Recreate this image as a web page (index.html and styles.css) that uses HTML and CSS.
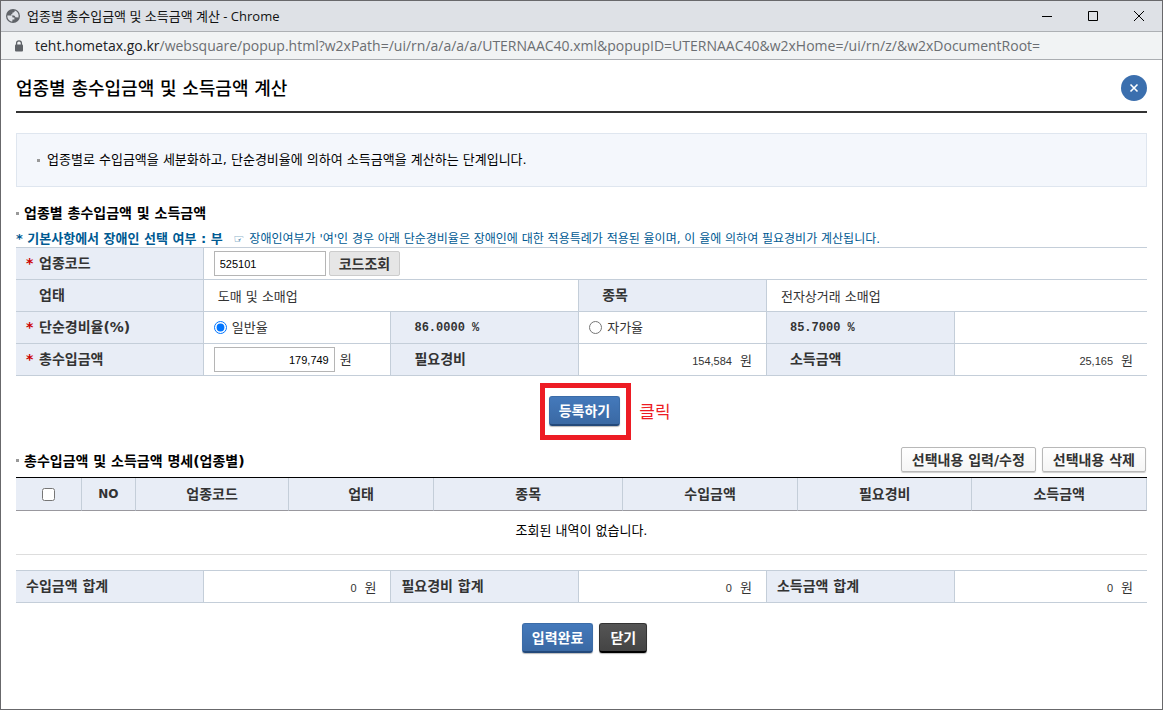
FILE: index.html
```html
<!DOCTYPE html>
<html lang="ko">
<head>
<meta charset="utf-8">
<title>업종별 총수입금액 및 소득금액 계산</title>
<link rel="stylesheet" href="styles.css">
</head>
<body>
<div class="window">
  <header class="titlebar">
    <svg class="globe" viewBox="0 0 16 16" aria-hidden="true"><circle cx="8" cy="8" r="7" fill="#5f6368"/><path d="M2.300 7.500 L5.500 7.500 C7 7.500 7.600 8.300 7.600 9.600 L9.400 9.600 L9.400 11.400 L7.500 11.600 L7.300 13.600 C4.600 13.400 2.200 11 2.300 7.500 Z M9.800 2.500 C9.800 4 9 4.600 7.600 4.600 L7.200 6.300 L6 6.600 L6 7.400 L8.800 7.500 C9.900 7.600 10.200 8.600 10.400 9.300 L13.400 9.400 C14.300 6.600 12.600 3.400 9.800 2.500 Z" fill="#dee1e6"/></svg>
    <span class="window-title">업종별 총수입금액 및 소득금액 계산 - Chrome</span>
    <button class="win-btn" type="button" aria-label="최소화"><svg viewBox="0 0 12 12"><path d="M1 6.500H11" stroke="#000" fill="none"/></svg></button>
    <button class="win-btn" type="button" aria-label="최대화"><svg viewBox="0 0 12 12"><path d="M1.500 1.500H10.500V10.500H1.500Z" stroke="#000" fill="none"/></svg></button>
    <button class="win-btn" type="button" aria-label="창 닫기"><svg viewBox="0 0 12 12"><path d="M1 1L11 11M11 1L1 11" stroke="#000" fill="none"/></svg></button>
  </header>
  <div class="addressbar">
    <svg class="lock" viewBox="0 0 10 12" aria-hidden="true"><path d="M2.600 5V3.200A2.400 2.400 0 0 1 7.400 3.200V5" fill="none" stroke="#5f6368" stroke-width="1.300"/><rect x="1" y="4.500" width="8" height="7" rx="1" fill="#5f6368"/></svg>
    <span class="url"><span class="host">teht.hometax.go.kr</span>/websquare/popup.html?w2xPath=/ui/rn/a/a/a/a/UTERNAAC40.xml&amp;popupID=UTERNAAC40&amp;w2xHome=/ui/rn/z/&amp;w2xDocumentRoot=</span>
  </div>

  <main class="page">
    <div class="page-head">
      <h1>업종별 총수입금액 및 소득금액 계산</h1>
      <button class="close" type="button" aria-label="닫기"><svg viewBox="0 0 10 10"><path d="M1.500 1.500L8.500 8.500M8.500 1.500L1.500 8.500" stroke="#fff" stroke-width="1.600" fill="none"/></svg></button>
    </div>

    <p class="info">업종별로 수입금액을 세분화하고, 단순경비율에 의하여 소득금액을 계산하는 단계입니다.</p>

    <h2 class="section-title">업종별 총수입금액 및 소득금액</h2>
    <p class="note"><strong>* 기본사항에서 장애인 선택 여부 : 부</strong><span class="hand">☞</span><span>장애인여부가 '여'인 경우 아래 단순경비율은 장애인에 대한 적용특례가 적용된 율이며, 이 율에 의하여 필요경비가 계산됩니다.</span></p>

    <table class="form">
      <colgroup><col class="c-sixth" span="5"><col></colgroup>
      <tr>
        <th class="required"><label for="code">업종코드</label></th>
        <td colspan="5"><div class="fields"><input class="text code" id="code" type="text" value="525101"><button class="btn-gray" type="button">코드조회</button></div></td>
      </tr>
      <tr>
        <th>업태</th>
        <td class="value" colspan="2">도매 및 소매업</td>
        <th>종목</th>
        <td class="value" colspan="2">전자상거래 소매업</td>
      </tr>
      <tr>
        <th class="required">단순경비율(%)</th>
        <td><label class="fields"><input type="radio" name="rate" checked>일반율</label></td>
        <th class="rate">86.0000 %</th>
        <td><label class="fields"><input type="radio" name="rate">자가율</label></td>
        <th class="rate">85.7000 %</th>
        <td></td>
      </tr>
      <tr>
        <th class="required"><label for="income">총수입금액</label></th>
        <td><div class="fields"><input class="text amount" id="income" type="text" value="179,749"><span>원</span></div></td>
        <th>필요경비</th>
        <td class="value money"><span class="num">154,584</span>원</td>
        <th>소득금액</th>
        <td class="value money"><span class="num">25,165</span>원</td>
      </tr>
    </table>

    <div class="actions register">
      <div class="marked"><button class="btn-blue" type="button">등록하기</button><span class="callout">클릭</span></div>
    </div>

    <div class="list-head">
      <h2 class="section-title">총수입금액 및 소득금액 명세(업종별)</h2>
      <button class="btn-white" type="button">선택내용 입력/수정</button>
      <button class="btn-white" type="button">선택내용 삭제</button>
    </div>
    <table class="list">
      <colgroup><col class="c-check"><col class="c-no"><col class="c-code"><col class="c-type"><col class="c-item"><col class="c-sum"><col class="c-sum"><col class="c-sum"></colgroup>
      <thead>
        <tr><th><input type="checkbox" aria-label="전체 선택"></th><th class="latin">NO</th><th>업종코드</th><th>업태</th><th>종목</th><th>수입금액</th><th>필요경비</th><th>소득금액</th></tr>
      </thead>
      <tbody><tr><td colspan="8">조회된 내역이 없습니다.</td></tr></tbody>
    </table>

    <table class="form totals">
      <colgroup><col class="c-sixth" span="5"><col></colgroup>
      <tr>
        <th>수입금액 합계</th><td class="value money"><span class="num">0</span>원</td>
        <th>필요경비 합계</th><td class="value money"><span class="num">0</span>원</td>
        <th>소득금액 합계</th><td class="value money"><span class="num">0</span>원</td>
      </tr>
    </table>

    <div class="actions">
      <button class="btn-blue" type="button">입력완료</button>
      <button class="btn-blue btn-dark" type="button">닫기</button>
    </div>
  </main>
</div>
</body>
</html>
```
FILE: styles.css
```css
* { box-sizing: border-box; }
body {
  margin: 0;
  font: 13px/18px "DejaVu Sans", "Noto Sans CJK KR", sans-serif;
  color: #333;
  background: #fff;
}
button, input { font: inherit; margin: 0; }
button { padding: 0; white-space: nowrap; }
h1, h2, p { margin: 0; }

.window {
  min-height: 100vh;
  border: 1px solid #68686b;
}

/* browser frame */
.titlebar {
  display: flex;
  align-items: center;
  height: 31px;
  padding-left: 4px;
  background: #dee1e6;
  border-bottom: 1px solid #adb0b4;
}
.globe { width: 16px; height: 16px; }
.window-title {
  flex: 1;
  margin-left: 6px;
  font-family: "Open Sans", "Noto Sans CJK KR", sans-serif;
  color: #111;
}
.win-btn {
  width: 46px;
  height: 30px;
  border: 0;
  background: none;
}
.win-btn svg { width: 12px; height: 12px; display: block; margin: 0 auto; }
.addressbar {
  display: flex;
  align-items: center;
  height: 28px;
  padding-left: 13px;
  background: #f1f3f4;
  border-bottom: 1px solid #aaadb1;
}
.lock { width: 10px; height: 12px; }
.url {
  margin-left: 11px;
  font-family: "Open Sans", sans-serif;
  font-size: 14px;
  white-space: nowrap;
  color: #6b6e72;
}
.host { color: #202124; }

/* page */
.page { padding: 0 15px 24px; }
.page-head {
  display: flex;
  align-items: center;
  justify-content: space-between;
  height: 53px;
  padding-top: 5px;
  border-bottom: 2px solid #333;
}
h1 { padding-top: 2px; font-size: 18px; line-height: 24px; font-weight: 500; color: #000; }
.close {
  width: 26px;
  height: 26px;
  border: 0;
  border-radius: 50%;
  background: #3b6fae;
}
.close svg { display: block; width: 10px; height: 10px; margin: 0 auto; }

.info {
  display: flex;
  align-items: center;
  height: 54px;
  margin-top: 20px;
  padding-left: 20px;
  border: 1px solid #dfe6ef;
  background: #f4f7fc;
  color: #000;
}
.info::before, .section-title::before {
  content: "";
  width: 3px;
  height: 3px;
  background: #999;
}
.info::before { margin-right: 7px; }

.section-title {
  display: flex;
  align-items: center;
  font-size: 14px;
  line-height: 20px;
  color: #000;
}
.section-title::before { margin-right: 5px; }
.info + .section-title { margin-top: 16px; }

.note {
  display: flex;
  height: 17px;
  margin-top: 7px;
  font-size: 12px;
  white-space: nowrap;
  color: #005a92;
}
.note strong { font-size: 13px; }
.hand { margin: 0 5px 0 11px; }

table { width: 100%; border-spacing: 0; table-layout: fixed; }
th, td { padding: 0; }

.form { border-top: 1px solid #c4ced9; }
.c-sixth { width: 16.6%; }
.form th, .form td {
  height: 32px;
  border-bottom: 1px solid #c4ced9;
  border-right: 1px solid #c4ced9;
  text-align: left;
}
.form td:last-child { border-right: 0; }
.form th {
  padding: 0 0 2px 23px;
  background: #e8edf6;
  font-size: 14px;
}
.form .required { padding-left: 10px; }
.required::before {
  content: "*";
  display: inline-block;
  width: 13px;
  color: #c00;
}
.form .rate { padding-bottom: 0; font-family: "Liberation Mono", monospace; font-size: 12px; }
.form td { padding-left: 10px; }
.form .value { padding: 3px 14px 0; }
.form .money { text-align: right; }
.num, .text { font-family: "Liberation Sans", sans-serif; font-size: 11px; }
.num { margin-right: 8px; }
.fields { display: flex; align-items: center; }
.fields input[type="radio"] { width: 13px; height: 13px; margin-right: 5px; }
.text {
  height: 25px;
  padding: 0 5px;
  border: 1px solid #b5b5b5;
  color: #000;
}
.code { width: 112px; margin-right: 3px; }
.amount { width: 121px; margin-right: 5px; text-align: right; }

.btn-gray, .btn-white {
  height: 25px;
  padding: 0 9px;
  border: 1px solid #ccc;
  border-radius: 2px;
  background: #e6e6e6;
  color: #333;
  font-size: 14px;
  line-height: 20px;
  font-weight: bold;
}
.btn-white {
  margin-left: 6px;
  padding: 0 10px;
  border-color: #b8b8b8;
  background: linear-gradient(#fff, #f5f5f5);
  box-shadow: 0 1px 1px #ccc;
}
.btn-blue {
  height: 30px;
  padding: 0 9px;
  border: 1px solid #3b6ca8;
  border-bottom: 2px solid #23497a;
  border-radius: 3px;
  background: linear-gradient(#4479bb, #3a69a4);
  box-shadow: 0 1px 1px #bbb;
  color: #fff;
  font-size: 14px;
  font-weight: bold;
}
.btn-dark {
  padding: 0 10px;
  border-color: #333;
  border-bottom-color: #000;
  background: linear-gradient(#555, #444);
}

.actions {
  display: flex;
  justify-content: center;
  gap: 6px;
  margin-top: 20px;
  padding-left: 6px;
}
.marked { position: relative; }
.marked::before {
  content: "";
  position: absolute;
  inset: -13px -11px -14px -9px;
  border: 5px solid #ed1c24;
  pointer-events: none;
}
.callout {
  position: absolute;
  left: 100%;
  top: 4px;
  margin-left: 19px;
  font-size: 17px;
  line-height: 24px;
  white-space: nowrap;
  color: #ed1c24;
}

.list-head { display: flex; align-items: center; margin-top: 21px; padding-right: 1px; }
.list-head .section-title { flex: 1; padding-top: 2px; }

.list { margin-top: 5px; border-top: 1px solid #000; }
.list th {
  height: 33px;
  border-right: 1px solid #c4ced9;
  border-bottom: 1px solid #99989e;
  background: #e8edf6;
  font-size: 14px;
}
.list .latin { font-size: 12px; }
.list th input { display: block; width: 13px; height: 13px; margin: 0 auto; }
.list td {
  height: 44px;
  padding-bottom: 4px;
  border-bottom: 1px solid #ddd;
  text-align: center;
  color: #000;
}
.c-check { width: 5.8%; }
.c-no { width: 4.8%; }
.c-code { width: 13.5%; }
.c-type { width: 12.8%; }
.c-item { width: 16.7%; }
.c-sum { width: 15.4%; }

.totals { margin-top: 15px; }
.totals th { padding-left: 10px; }
```
